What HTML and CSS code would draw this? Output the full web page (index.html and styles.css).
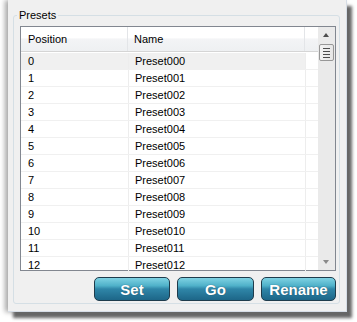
FILE: index.html
```html
<!DOCTYPE html>
<html>
<head>
<meta charset="utf-8">
<link rel="stylesheet" href="styles.css">
</head>
<body>
<div class="window">
  <fieldset class="group">
    <legend>Presets</legend>
    <div class="list">
      <div class="grid">
        <div class="head">
          <div class="hc c1">Position</div>
          <div class="hc c2">Name</div>
          <div class="hc c3"></div>
        </div>
        <div class="rows">
          <div class="row sel"><div class="c1">0</div><div class="c2">Preset000</div><div class="c3"></div></div>
          <div class="row"><div class="c1">1</div><div class="c2">Preset001</div><div class="c3"></div></div>
          <div class="row"><div class="c1">2</div><div class="c2">Preset002</div><div class="c3"></div></div>
          <div class="row"><div class="c1">3</div><div class="c2">Preset003</div><div class="c3"></div></div>
          <div class="row"><div class="c1">4</div><div class="c2">Preset004</div><div class="c3"></div></div>
          <div class="row"><div class="c1">5</div><div class="c2">Preset005</div><div class="c3"></div></div>
          <div class="row"><div class="c1">6</div><div class="c2">Preset006</div><div class="c3"></div></div>
          <div class="row"><div class="c1">7</div><div class="c2">Preset007</div><div class="c3"></div></div>
          <div class="row"><div class="c1">8</div><div class="c2">Preset008</div><div class="c3"></div></div>
          <div class="row"><div class="c1">9</div><div class="c2">Preset009</div><div class="c3"></div></div>
          <div class="row"><div class="c1">10</div><div class="c2">Preset010</div><div class="c3"></div></div>
          <div class="row"><div class="c1">11</div><div class="c2">Preset011</div><div class="c3"></div></div>
          <div class="row"><div class="c1">12</div><div class="c2">Preset012</div><div class="c3"></div></div>
        </div>
      </div>
      <div class="scroll">
        <div class="arrow up"></div>
        <div class="thumb"><span></span><span></span><span></span><span></span></div>
        <div class="track"></div>
        <div class="arrow down"></div>
      </div>
    </div>
    <div class="buttons">
      <button class="btn set">Set</button>
      <button class="btn go">Go</button>
      <button class="btn rename">Rename</button>
    </div>
  </fieldset>
</div>
</body>
</html>
```
FILE: styles.css
```css
html, body {
  margin: 0;
  padding: 0;
  background: #ffffff;
}
body {
  width: 357px;
  height: 322px;
  overflow: hidden;
  font-family: "Liberation Sans", Arial, sans-serif;
  font-size: 11px;
  color: #000;
}
.window {
  margin: 0 0 0 8px;
  width: 339px;
  height: 312px;
  box-sizing: border-box;
  background: #f0f0f0;
  border-right: 1px solid #d6dde6;
  border-bottom: 1px solid #d6dde6;
  padding: 9px 6px 0 5px;
  box-shadow: 5px 6px 3px #666, -3px 0 5px rgba(0,0,0,0.35);
}
.group {
  margin: 0;
  padding: 0 0 0 6px;
  border: 1px solid #d5dfe5;
  border-radius: 3px;
  height: 295px;
  box-sizing: border-box;
}
.group legend {
  padding: 0 2px;
  margin-left: -3px;
  font-size: 11px;
  line-height: 12px;
  color: #000;
}
.list {
  display: flex;
  width: 316px;
  height: 245px;
  margin-top: 5px;
  box-sizing: border-box;
  border: 1px solid #828790;
  background: #fff;
}
.grid {
  flex: 1;
  display: flex;
  flex-direction: column;
}
.head {
  display: flex;
  height: 24px;
  background: linear-gradient(#ffffff, #ffffff 45%, #f3f4f6 50%, #eef0f2);
  border-bottom: 1px solid #d5d5d5;
}
.hc {
  box-sizing: border-box;
  padding-left: 7px;
  line-height: 25px;
  border-right: 1px solid #e3e5e8;
}
.c1 { width: 107px; flex: none; box-sizing: border-box; padding-left: 7px; }
.c2 { width: 177px; flex: none; box-sizing: border-box; padding-left: 6px; border-left: 1px solid #ededed; }
.c3 { flex: 1; border-left: 1px solid #ededed; }
.head .c2 { border-left: none; }
.head .c3 { border-left: none; border-right: none; }
.rows { flex: 1; padding-top: 1px; }
.row {
  display: flex;
  height: 17px;
  line-height: 17px;
  border-bottom: 1px solid #f0f0f0;
  box-sizing: border-box;
}
.row.sel { background: #f0f0f0; }
.row.sel .c3 { background: #fff; }
.scroll {
  width: 17px;
  flex: none;
  background: #eaeaea;
  display: flex;
  flex-direction: column;
  align-items: center;
}
.arrow {
  height: 17px;
  width: 17px;
  position: relative;
}
.arrow::after {
  content: "";
  position: absolute;
  left: 5px;
  border-left: 3.5px solid transparent;
  border-right: 3.5px solid transparent;
}
.arrow.up::after { top: 6px; border-bottom: 4px solid #4d4d4d; }
.arrow.down::after { top: 7px; border-top: 4px solid #8a8a8a; }
.thumb {
  width: 15px;
  height: 17px;
  box-sizing: border-box;
  border: 1px solid #979797;
  border-radius: 2px;
  background: linear-gradient(90deg, #f2f2f2, #e6e6e6);
  display: flex;
  flex-direction: column;
  align-items: center;
  justify-content: center;
  gap: 2px;
}
.thumb span {
  display: block;
  width: 7px;
  height: 1px;
  background: #4d4d4d;
}
.track { flex: 1; }
.buttons {
  display: flex;
  justify-content: flex-end;
  gap: 7px;
  margin-top: 6px;
  padding-right: 0;
  width: 316px;
}
.btn {
  height: 24px;
  border: 1px solid #1f3c4c;
  border-radius: 5px;
  background: linear-gradient(#7fd2e3 0%, #4fb1c9 35%, #2f86a8 50%, #1d6688 100%);
  color: #fff;
  font-family: "Liberation Sans", Arial, sans-serif;
  font-weight: bold;
  font-size: 15px;
  padding: 0;
  text-shadow: 0 0 1px #1a4a60;
}
.set { width: 76px; }
.go { width: 77px; }
.rename { width: 75px; }
```
